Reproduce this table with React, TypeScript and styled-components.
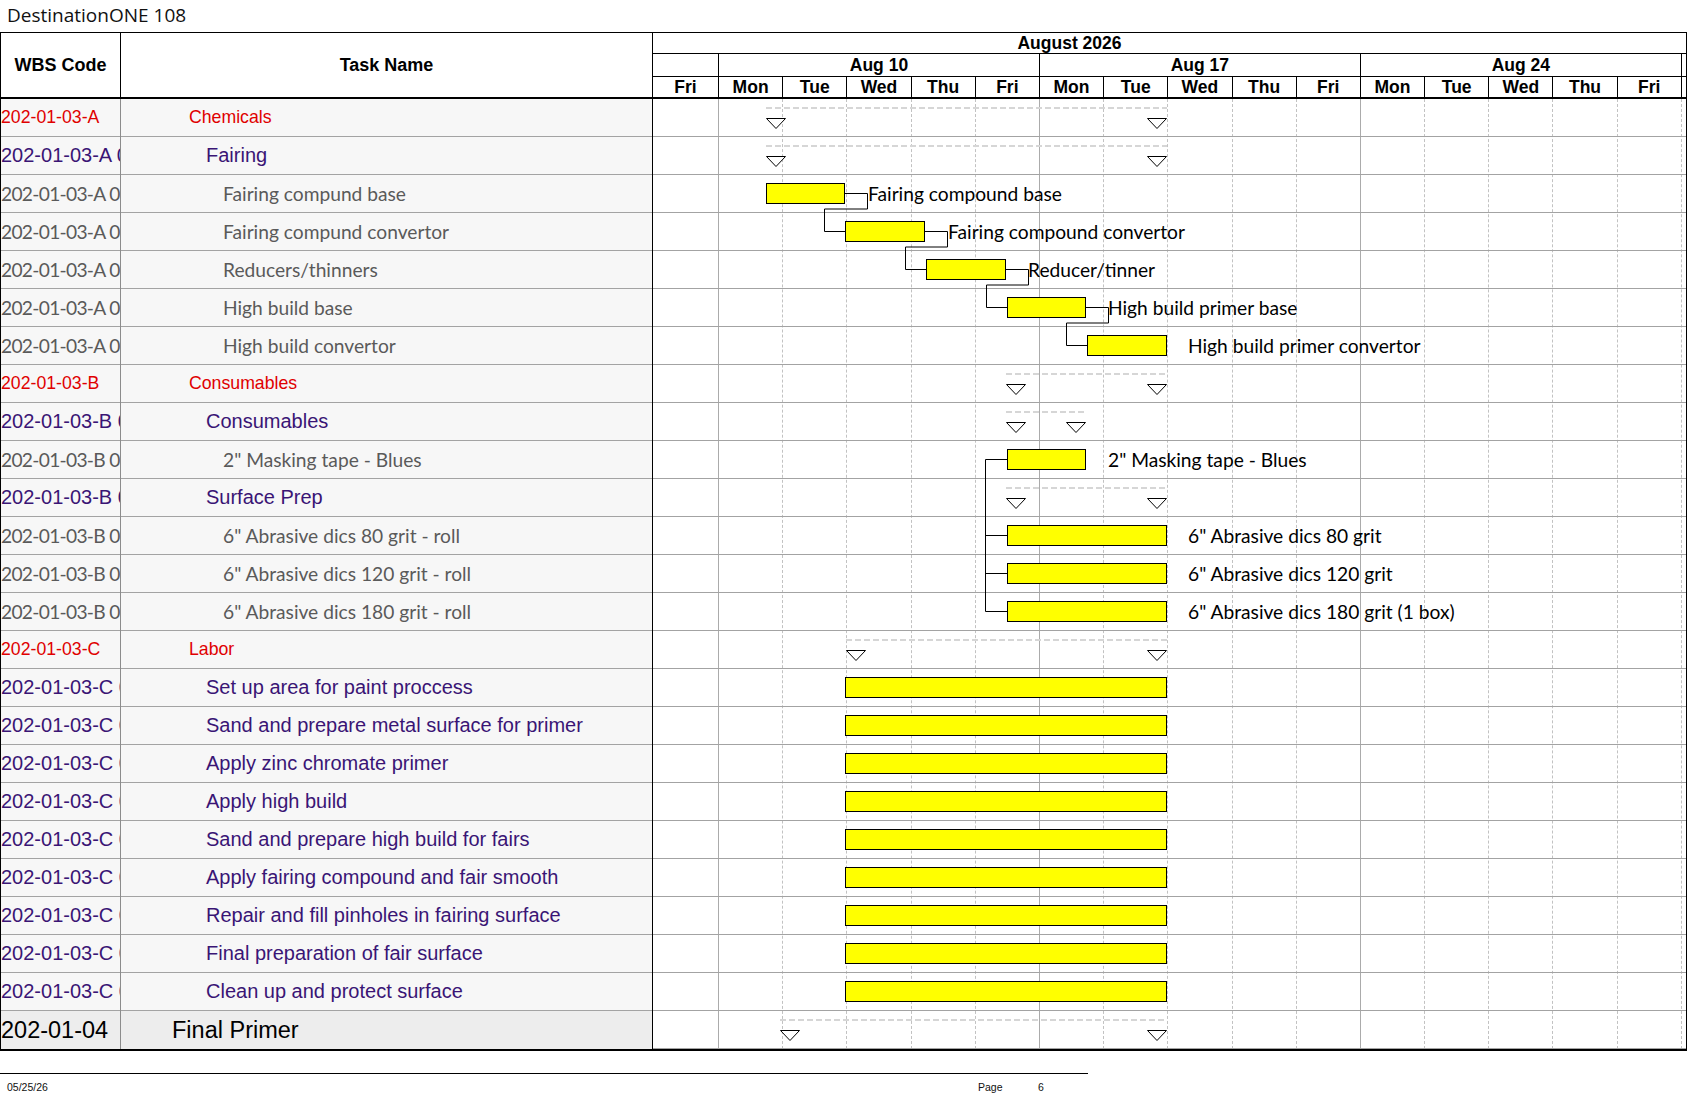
import React from "react"
import styled, { createGlobalStyle, css } from "styled-components"

// timeline geometry (page pixels)
const ROW_H = 38
const CHART_LEFT = 653
const FIRST_DAY_W = 65
const DAY_W = 64.2
const COLS = `${FIRST_DAY_W}px repeat(15, ${DAY_W}px) 1fr`

const DAYS = ["Fri", "Mon", "Tue", "Wed", "Thu", "Fri", "Mon", "Tue", "Wed", "Thu", "Fri", "Mon", "Tue", "Wed", "Thu", "Fri"]
const WEEKS = ["Aug 10", "Aug 17", "Aug 24"]

type Level = "group" | "sub" | "item" | "phase"

interface Task {
  wbs: string
  name: string
  level: Level
  bar?: [number, number]
  summary?: [number, number]
  label?: string
  labelX?: number
}

const labor = (name: string): Task => ({ wbs: "202-01-03-C 01", name, level: "sub", bar: [845, 1167] })

const tasks: Task[] = [
  { wbs: "202-01-03-A", name: "Chemicals", level: "group", summary: [766, 1167] },
  { wbs: "202-01-03-A 01", name: "Fairing", level: "sub", summary: [766, 1167] },
  { wbs: "202-01-03-A 01.01", name: "Fairing compund base", level: "item", bar: [766, 845], label: "Fairing compound base", labelX: 868 },
  { wbs: "202-01-03-A 01.02", name: "Fairing compund convertor", level: "item", bar: [845, 925], label: "Fairing compound convertor", labelX: 948 },
  { wbs: "202-01-03-A 01.03", name: "Reducers/thinners", level: "item", bar: [926, 1006], label: "Reducer/tinner", labelX: 1028 },
  { wbs: "202-01-03-A 01.04", name: "High build base", level: "item", bar: [1007, 1086], label: "High build primer base", labelX: 1108 },
  { wbs: "202-01-03-A 01.05", name: "High build convertor", level: "item", bar: [1087, 1167], label: "High build primer convertor", labelX: 1188 },
  { wbs: "202-01-03-B", name: "Consumables", level: "group", summary: [1006, 1167] },
  { wbs: "202-01-03-B 01", name: "Consumables", level: "sub", summary: [1006, 1086] },
  { wbs: "202-01-03-B 01.01", name: "2\" Masking tape - Blues", level: "item", bar: [1007, 1086], label: "2\" Masking tape - Blues", labelX: 1108 },
  { wbs: "202-01-03-B 02", name: "Surface Prep", level: "sub", summary: [1006, 1167] },
  { wbs: "202-01-03-B 02.01", name: "6\" Abrasive dics 80 grit - roll", level: "item", bar: [1007, 1167], label: "6\" Abrasive dics 80 grit", labelX: 1188 },
  { wbs: "202-01-03-B 02.02", name: "6\" Abrasive dics 120 grit - roll", level: "item", bar: [1007, 1167], label: "6\" Abrasive dics 120 grit", labelX: 1188 },
  { wbs: "202-01-03-B 02.03", name: "6\" Abrasive dics 180 grit - roll", level: "item", bar: [1007, 1167], label: "6\" Abrasive dics 180 grit (1 box)", labelX: 1188 },
  { wbs: "202-01-03-C", name: "Labor", level: "group", summary: [846, 1167] },
  labor("Set up area for paint proccess"),
  labor("Sand and prepare metal surface for primer"),
  labor("Apply zinc chromate primer"),
  labor("Apply high build"),
  labor("Sand and prepare high build for fairs"),
  labor("Apply fairing compound and fair smooth"),
  labor("Repair and fill pinholes in fairing surface"),
  labor("Final preparation of fair surface"),
  labor("Clean up and protect surface"),
  { wbs: "202-01-04", name: "Final Primer", level: "phase", summary: [780, 1167] },
]

const lx = (x: number) => x - CHART_LEFT
const midY = (row: number) => row * ROW_H + 18.5

// finish-to-start link from one bar to the bar on the next row
const chainLink = (row: number) => {
  const [, end] = tasks[row].bar!
  const [next] = tasks[row + 1].bar!
  const yTurn = row * ROW_H + 34
  return `M${lx(end)} ${midY(row)} H${lx(end) + 22.5} V${yTurn} H${lx(next) - 20.5} V${midY(row + 1)} H${lx(next)}`
}

// the masking tape / abrasive bracket
const bracketLink = () => {
  const x = lx(985.5)
  const rows = [9, 11, 12, 13]
  const ticks = rows.map(r => `M${x} ${midY(r)} H${lx(1007)}`).join(" ")
  return `M${x} ${midY(9)} V${midY(13)} ${ticks}`
}

const links = [2, 3, 4, 5].map(chainLink).concat(bracketLink())

const GlobalStyle = createGlobalStyle`
  html, body {
    margin: 0;
    background: #ffffff;
  }
  body {
    font-family: "Liberation Sans", Arial, sans-serif;
    color: #000;
  }
`

const Page = styled.div`
  width: 1687px;
`

const Title = styled.div`
  height: 32px;
  padding-left: 7px;
  font-family: "Open Sans", sans-serif;
  font-weight: 400;
  font-size: 19px;
  line-height: 30px;
  color: #111;
`

const Sheet = styled.div`
  width: 1687px;
  box-sizing: border-box;
  border: 1px solid #000;
  border-bottom-width: 2px;
`

const HeaderRow = styled.div`
  display: flex;
  height: 66px;
  box-sizing: border-box;
  border-bottom: 2px solid #000;
`

const ColumnHead = styled.div<{ $w: number }>`
  width: ${p => p.$w}px;
  flex: none;
  box-sizing: border-box;
  border-right: 1px solid #000;
  display: flex;
  align-items: center;
  justify-content: center;
  font-weight: 700;
  font-size: 18px;
`

const Timescale = styled.div`
  flex: 1;
  display: grid;
  grid-template-columns: ${COLS};
  grid-template-rows: 21px 23px 20px;
  font-weight: 700;
  font-size: 17.5px;
`

const ScaleCell = styled.div<{ $span?: number; $edge?: boolean }>`
  grid-column: span ${p => p.$span ?? 1};
  box-sizing: border-box;
  display: flex;
  align-items: center;
  justify-content: center;
  white-space: nowrap;
  overflow: hidden;
  border-left: ${p => (p.$edge ? "1px solid #000" : "none")};
`

const MonthCell = styled(ScaleCell)`
  grid-column: 1 / -1;
  border-bottom: 1px solid #000;
  padding-right: 200px;
`

const WeekCell = styled(ScaleCell)`
  border-bottom: 1px solid #000;
`

const Body = styled.div`
  display: flex;
`

const TableColumn = styled.div<{ $w: number; $rule: string }>`
  width: ${p => p.$w}px;
  flex: none;
  box-sizing: border-box;
  border-right: 1px solid ${p => p.$rule};
`

const levelFont = {
  group: css`
    font-size: 17.7px;
    color: #e00000;
  `,
  sub: css`
    font-size: 20px;
    color: #3a1575;
  `,
  item: css`
    font-family: Lato, "Liberation Sans", sans-serif;
    font-size: 19.2px;
    color: #5a5a5a;
  `,
  phase: css`
    font-size: 23.5px;
    color: #000;
  `,
}

const indent = { group: 68, sub: 85, item: 102, phase: 51 }

const TableCell = styled.div<{ $level: Level }>`
  height: ${ROW_H}px;
  box-sizing: border-box;
  border-bottom: 1px solid #a3a3a3;
  background: ${p => (p.$level === "phase" ? "#ededed" : "#f7f7f7")};
  display: flex;
  align-items: center;
  white-space: nowrap;
  overflow: hidden;
  ${p => levelFont[p.$level]}

  &:last-child {
    border-bottom: none;
  }
`

const WbsCell = styled(TableCell)`
  letter-spacing: ${p => (p.$level === "item" ? "-0.7px" : "normal")};
`

const NameCell = styled(TableCell)`
  padding-left: ${p => indent[p.$level]}px;
`

const ChartColumn = styled.div`
  flex: 1;
  position: relative;
`

const DayGrid = styled.div`
  position: absolute;
  inset: 0;
  display: grid;
  grid-template-columns: ${COLS};
  pointer-events: none;
`

const DayLine = styled.div<{ $kind: "none" | "day" | "week" }>`
  border-left: ${p =>
    p.$kind === "week" ? "1px solid #ababab" : p.$kind === "day" ? "1px dashed #c2c2c2" : "none"};
`

const ChartRow = styled.div`
  position: relative;
  height: ${ROW_H}px;
  box-sizing: border-box;
  border-bottom: 1px solid #a3a3a3;

  &:last-child {
    border-bottom: none;
  }
`

const Bar = styled.div`
  position: absolute;
  top: 8px;
  height: 21px;
  box-sizing: border-box;
  background: #ffff00;
  border: 1px solid #000;
`

const SummaryLine = styled.div`
  position: absolute;
  top: 7.5px;
  height: 2px;
  background: repeating-linear-gradient(to right, #d6d6d6 0 6px, transparent 6px 9px);
`

const Marker = styled.svg`
  position: absolute;
  top: 19px;
  width: 20px;
  height: 11px;
  overflow: visible;
`

const BarLabel = styled.div`
  position: absolute;
  top: 8px;
  height: 21px;
  display: flex;
  align-items: center;
  white-space: nowrap;
  font-family: Lato, "Liberation Sans", sans-serif;
  font-size: 19.2px;
  color: #000;
`

const Links = styled.svg`
  position: absolute;
  inset: 0;
  width: 100%;
  height: 100%;
  overflow: visible;
  pointer-events: none;
`

const Footer = styled.footer`
  margin-top: 22px;
  width: 1088px;
  height: 26px;
  border-top: 1px solid #000;
  display: grid;
  grid-template-columns: 978px 60px 1fr;
  align-items: center;
  font-size: 10.5px;
  color: #111;
`

const FooterDate = styled.span`
  padding-left: 7px;
`

const SummaryMarker = ({ x }: { x: number }) => (
  <Marker style={{ left: x }} viewBox="0 0 20 11">
    <polygon points="0.5,0.5 19.5,0.5 10,10.5" fill="#fff" stroke="#000" strokeWidth="1" />
  </Marker>
)

const TimelineRow = ({ task }: { task: Task }) => (
  <ChartRow>
    {task.summary && (
      <>
        <SummaryLine style={{ left: lx(task.summary[0]), width: task.summary[1] - task.summary[0] }} />
        <SummaryMarker x={lx(task.summary[0])} />
        <SummaryMarker x={lx(task.summary[1]) - 20} />
      </>
    )}
    {task.bar && <Bar style={{ left: lx(task.bar[0]), width: task.bar[1] - task.bar[0] }} />}
    {task.label && <BarLabel style={{ left: lx(task.labelX!) }}>{task.label}</BarLabel>}
  </ChartRow>
)

export default function App() {
  return (
    <Page>
      <GlobalStyle />
      <Title>DestinationONE 108</Title>
      <Sheet>
        <HeaderRow>
          <ColumnHead $w={120}>WBS Code</ColumnHead>
          <ColumnHead $w={532}>Task Name</ColumnHead>
          <Timescale>
            <MonthCell>August 2026</MonthCell>
            <WeekCell />
            {WEEKS.map(w => (
              <WeekCell key={w} $span={5} $edge>{w}</WeekCell>
            ))}
            <WeekCell $edge />
            {DAYS.map((d, i) => (
              <ScaleCell key={i} $edge={i > 0}>{d}</ScaleCell>
            ))}
            <ScaleCell $edge />
          </Timescale>
        </HeaderRow>
        <Body>
          <TableColumn $w={120} $rule="#8c8c8c">
            {tasks.map((t, i) => (
              <WbsCell key={i} $level={t.level}>{t.wbs}</WbsCell>
            ))}
          </TableColumn>
          <TableColumn $w={532} $rule="#000">
            {tasks.map((t, i) => (
              <NameCell key={i} $level={t.level}>{t.name}</NameCell>
            ))}
          </TableColumn>
          <ChartColumn>
            <DayGrid>
              {DAYS.map((_, i) => (
                <DayLine key={i} $kind={i === 0 ? "none" : i % 5 === 1 ? "week" : "day"} />
              ))}
              <DayLine $kind="day" />
            </DayGrid>
            {tasks.map((t, i) => (
              <TimelineRow key={i} task={t} />
            ))}
            <Links>
              {links.map((d, i) => (
                <path key={i} d={d} fill="none" stroke="#000" strokeWidth="1" />
              ))}
            </Links>
          </ChartColumn>
        </Body>
      </Sheet>
      <Footer>
        <FooterDate>05/25/26</FooterDate>
        <span>Page</span>
        <span>6</span>
      </Footer>
    </Page>
  )
}
